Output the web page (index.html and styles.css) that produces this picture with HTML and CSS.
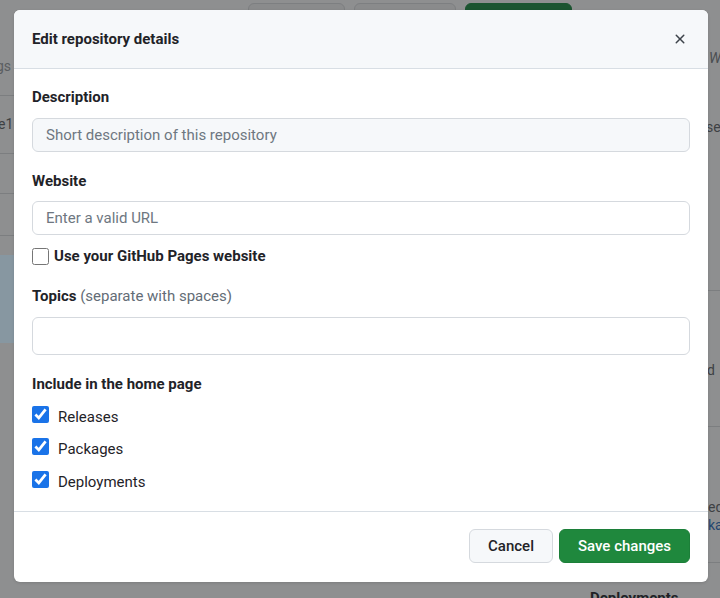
FILE: index.html
```html
<!DOCTYPE html>
<html lang="en">
<head>
<meta charset="utf-8">
<title>Edit repository details</title>
<link rel="stylesheet" href="styles.css">
</head>
<body>
<div class="backdrop" aria-hidden="true">
  <div class="bg-btns">
    <span class="bg-btn"></span>
    <span class="bg-btn wide"></span>
    <span class="bg-btn green"></span>
  </div>
  <span class="bg-text t-gs">gs</span>
  <span class="bg-text t-e1">e1</span>
  <span class="bg-text t-ste">ste</span>
  <span class="bg-text t-w">W</span>
  <span class="bg-text t-se">se</span>
  <span class="bg-text t-d">d</span>
  <span class="bg-text t-ed">ed</span>
  <span class="bg-text t-ka">ka</span>
  <span class="bg-text t-dep">Deployments</span>
  <span class="bg-band"></span>
  <span class="bg-line l1"></span>
  <span class="bg-line l2"></span>
  <span class="bg-line l3"></span>
  <span class="bg-line l4"></span>
  <span class="bg-line r1"></span>
  <span class="bg-line r2"></span>
  <span class="bg-line r3"></span>
</div>

<div class="dialog" role="dialog" aria-labelledby="dlg-title">
  <div class="dialog-header">
    <h1 id="dlg-title" class="dialog-title">Edit repository details</h1>
    <button class="close-btn" aria-label="Close">
      <svg width="16" height="16" viewBox="0 0 16 16"><path d="M3.72 3.72a.75.75 0 0 1 1.06 0L8 6.940l3.22-3.22a.749.749 0 0 1 1.275.326.749.749 0 0 1-.215.734L9.06 8l3.22 3.22a.749.749 0 0 1-.326 1.275.749.749 0 0 1-.734-.215L8 9.06l-3.220 3.22a.751.751 0 0 1-1.042-.018.751.751 0 0 1-.018-1.042L6.94 8 3.72 4.78a.75.75 0 0 1 0-1.06Z" fill="currentColor"/></svg>
    </button>
  </div>
  <div class="dialog-body">
    <div class="field-label">Description</div>
    <input class="input input-muted" type="text" placeholder="Short description of this repository">

    <div class="field-label mt-website">Website</div>
    <input class="input input-web" type="text" placeholder="Enter a valid URL">

    <label class="check-row bold mt-pages"><input type="checkbox" class="cb"><span>Use your GitHub Pages website</span></label>

    <div class="field-label mt-topics">Topics <span class="hint">(separate with spaces)</span></div>
    <input class="input input-topics" type="text">

    <div class="field-label mt-include">Include in the home page</div>
    <label class="check-row mt-rel"><input type="checkbox" class="cb" checked><span>Releases</span></label>
    <label class="check-row mt-pkg"><input type="checkbox" class="cb" checked><span>Packages</span></label>
    <label class="check-row mt-dep"><input type="checkbox" class="cb" checked><span>Deployments</span></label>
  </div>
  <div class="dialog-footer">
    <button class="btn btn-default">Cancel</button>
    <button class="btn btn-primary">Save changes</button>
  </div>
</div>
</body>
</html>
```

FILE: styles.css
```css
* { box-sizing: border-box; }

html, body {
  margin: 0;
  padding: 0;
}

body {
  width: 720px;
  height: 598px;
  overflow: hidden;
  background: #8e8f90;
  font-family: Roboto, "Liberation Sans", Arial, sans-serif;
  color: #1f2328;
  position: relative;
  padding-top: 10px;
}

/* ---------- dimmed page behind the dialog ---------- */
.backdrop {
  position: absolute;
  inset: 0;
  z-index: 0;
}
.bg-btns {
  position: absolute;
  top: 3px;
  left: 248px;
  display: flex;
  gap: 9px;
}
.bg-btn {
  width: 97px;
  height: 20px;
  border-radius: 6px;
  background: #8a8b8c;
  border: 1px solid #7d7f81;
}
.bg-btn.wide { width: 102px; }
.bg-btn.green { width: 107px; background: #1b5430; border-color: #1b5430; }
.bg-text {
  position: absolute;
  font-size: 14px;
  color: #3e4144;
  line-height: 16px;
}
.t-gs { left: -4px; top: 58px; color: #5a5d60; }
.t-e1 { left: -2px; top: 116px; }
.t-ste { left: -6px; top: 278px; color: #3e4144; }
.t-w { left: 709px; top: 50px; font-style: italic; color: #4a4d50; }
.t-se { left: 706px; top: 119px; }
.t-d { left: 707px; top: 362px; }
.t-ed { left: 708px; top: 499px; }
.t-ka { left: 708px; top: 517px; color: #23466f; }
.t-dep { left: 590px; top: 590px; font-weight: 700; font-size: 15px; color: #1f2226; }
.bg-band {
  position: absolute;
  left: 0;
  top: 255px;
  width: 14px;
  height: 88px;
  background: #8797a1;
}
.bg-line {
  position: absolute;
  height: 1px;
  background: #7c7e80;
}
.l1 { left: 0; width: 14px; top: 95px; }
.l2 { left: 0; width: 14px; top: 153px; }
.l3 { left: 0; width: 14px; top: 193px; }
.l4 { left: 0; width: 14px; top: 235px; }
.r1 { left: 708px; width: 12px; top: 290px; }
.r2 { left: 708px; width: 12px; top: 426px; }
.r3 { left: 708px; width: 12px; top: 562px; }

/* ---------- dialog ---------- */
.dialog {
  position: relative;
  z-index: 1;
  margin-left: 14px;
  width: 694px;
  height: 572px;
  background: #ffffff;
  border-radius: 6px;
  overflow: hidden;
  box-shadow: 0 1px 3px rgba(0,0,0,0.12);
  display: flex;
  flex-direction: column;
}

.dialog-header {
  height: 59px;
  background: #f6f8fa;
  border-bottom: 1px solid #d8dee4;
  display: flex;
  align-items: center;
  justify-content: space-between;
  padding: 0 12px 0 18px;
}
.dialog-title {
  margin: 0;
  font-size: 15px;
  font-weight: 700;
  color: #1f2328;
}
.close-btn {
  width: 32px;
  height: 32px;
  border: 0;
  background: transparent;
  color: #3d434a;
  display: flex;
  align-items: center;
  justify-content: center;
  padding: 0;
}

.dialog-body {
  padding: 18px 18px 0;
  display: flex;
  flex-direction: column;
  flex: 1;
  border-bottom: 1px solid #d8dee4;
}

.field-label {
  font-size: 15px;
  font-weight: 700;
  line-height: 20px;
  color: #1f2328;
}
.hint {
  font-weight: 400;
  color: #636c76;
}

.input {
  margin-top: 11px;
  width: 100%;
  height: 34px;
  border: 1px solid #d5d9de;
  border-radius: 6px;
  background: #ffffff;
  font-family: inherit;
  font-size: 15px;
  padding: 0 13px;
  color: #1f2328;
  outline: none;
}
.input::placeholder { color: #6e7781; }
.input-muted { background: #f6f8fa; }
.input-web { margin-top: 10px; }
.input-topics { height: 38px; }

.mt-website { margin-top: 19px; }
.mt-topics { margin-top: 20px; }
.mt-include { margin-top: 19px; }

.check-row {
  display: flex;
  align-items: center;
  gap: 9px;
  font-size: 15px;
  line-height: 20px;
  color: #1f2328;
}
.check-row.bold { font-weight: 700; gap: 5px; }
.check-row .cb { position: relative; top: -3px; }
.check-row.bold .cb { top: 0; }
.mt-pages { margin-top: 11px; }
.mt-rel { margin-top: 13px; }
.mt-pkg { margin-top: 12px; }
.mt-dep { margin-top: 13px; }

.cb {
  margin: 0;
  width: 17px;
  height: 17px;
  accent-color: #1a73e8;
}

.dialog-footer {
  height: 70px;
  display: flex;
  justify-content: flex-end;
  align-items: flex-start;
  gap: 6px;
  padding: 17px 18px 0;
}
.btn {
  height: 34px;
  padding: 0 18px;
  border-radius: 6px;
  font-family: inherit;
  font-size: 15px;
  font-weight: 500;
  cursor: pointer;
}
.btn-default {
  background: #f6f8fa;
  border: 1px solid #d5d9de;
  color: #1f2328;
}
.btn-primary {
  background: #1f883d;
  border: 1px solid #1c7f39;
  color: #ffffff;
}
```
